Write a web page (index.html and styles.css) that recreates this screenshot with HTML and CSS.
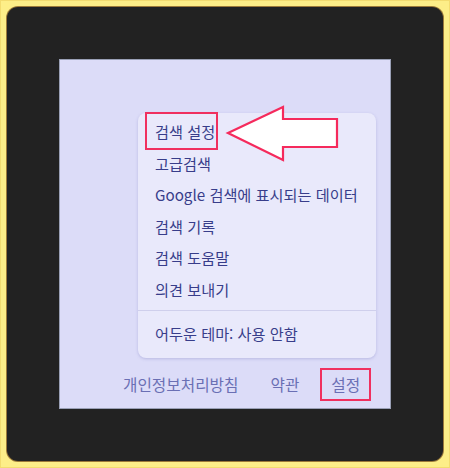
FILE: index.html
```html
<!DOCTYPE html>
<html lang="ko">
<head>
<meta charset="utf-8">
<title>검색 설정</title>
<link rel="stylesheet" href="styles.css">
</head>
<body>
<div class="frame">
  <div class="panel">
    <div class="screen">
      <div class="menu">
        <div class="item"><span class="mark">검색 설정</span></div>
        <div class="item">고급검색</div>
        <div class="item">Google 검색에 표시되는 데이터</div>
        <div class="item">검색 기록</div>
        <div class="item">검색 도움말</div>
        <div class="item">의견 보내기</div>
        <div class="divider"></div>
        <div class="item">어두운 테마: 사용 안함</div>
      </div>
      <div class="footer">
        <span>개인정보처리방침</span>
        <span>약관</span>
        <span class="mark-foot">설정</span>
      </div>
      <svg class="arrow" width="125" height="70" viewBox="0 0 125 70">
        <polygon points="8,33 63,7 63,19 117,19 117,47 63,47 63,60" fill="#ffffff" stroke="#f52a5c" stroke-width="2.2" stroke-linejoin="miter"/>
      </svg>
    </div>
  </div>
</div>
</body>
</html>
```
FILE: styles.css
```css
* { box-sizing: border-box; }
html, body { margin: 0; padding: 0; }
body {
  width: 450px;
  height: 468px;
  background: #fdee88;
  font-family: "Noto Sans CJK KR", "Noto Sans", sans-serif;
}
.frame {
  width: 450px;
  height: 468px;
  padding: 7px;
  background: #fdee88;
  box-shadow: inset 0 0 0 1px #f3dc70;
}
.panel {
  width: 100%;
  height: 100%;
  background: #222222;
  border-radius: 11px;
  box-shadow: 0 0 0 1px #9c7a3a;
  padding: 52px 52px 52px 52px;
}
.screen {
  position: relative;
  width: 100%;
  height: 100%;
  background: #dcdcf8;
  border: 1px solid #9aa0b6;
  display: flex;
  flex-direction: column;
}
.menu {
  margin-top: 53px;
  margin-left: 78px;
  width: 238px;
  background: #e9e9fb;
  border-radius: 8px;
  box-shadow: 0 1px 3px rgba(120, 120, 190, 0.35);
  padding: 3px 0 9px 0;
  color: #383d8a;
  font-size: 15.2px;
}
.item {
  height: 31.6px;
  line-height: 31.6px;
  padding-left: 17px;
  white-space: nowrap;
}
.divider {
  height: 1px;
  background: #cfcfec;
  margin: 4px 0 7px 0;
}
.mark { position: relative; }
.mark::after {
  content: "";
  position: absolute;
  left: -10px;
  right: -3px;
  top: -8px;
  bottom: -8px;
  border: 2px solid #f0305f;
}
.footer {
  margin-top: 16px;
  margin-left: 63px;
  display: flex;
  gap: 32px;
  font-size: 15.7px;
  line-height: 22px;
  color: #6a6fb4;
}
.mark-foot { position: relative; }
.mark-foot::after {
  content: "";
  position: absolute;
  left: -11px;
  right: -11px;
  top: -6px;
  bottom: -5px;
  border: 2px solid #f0305f;
}
.arrow {
  position: absolute;
  left: 160px;
  top: 40px;
}
```
